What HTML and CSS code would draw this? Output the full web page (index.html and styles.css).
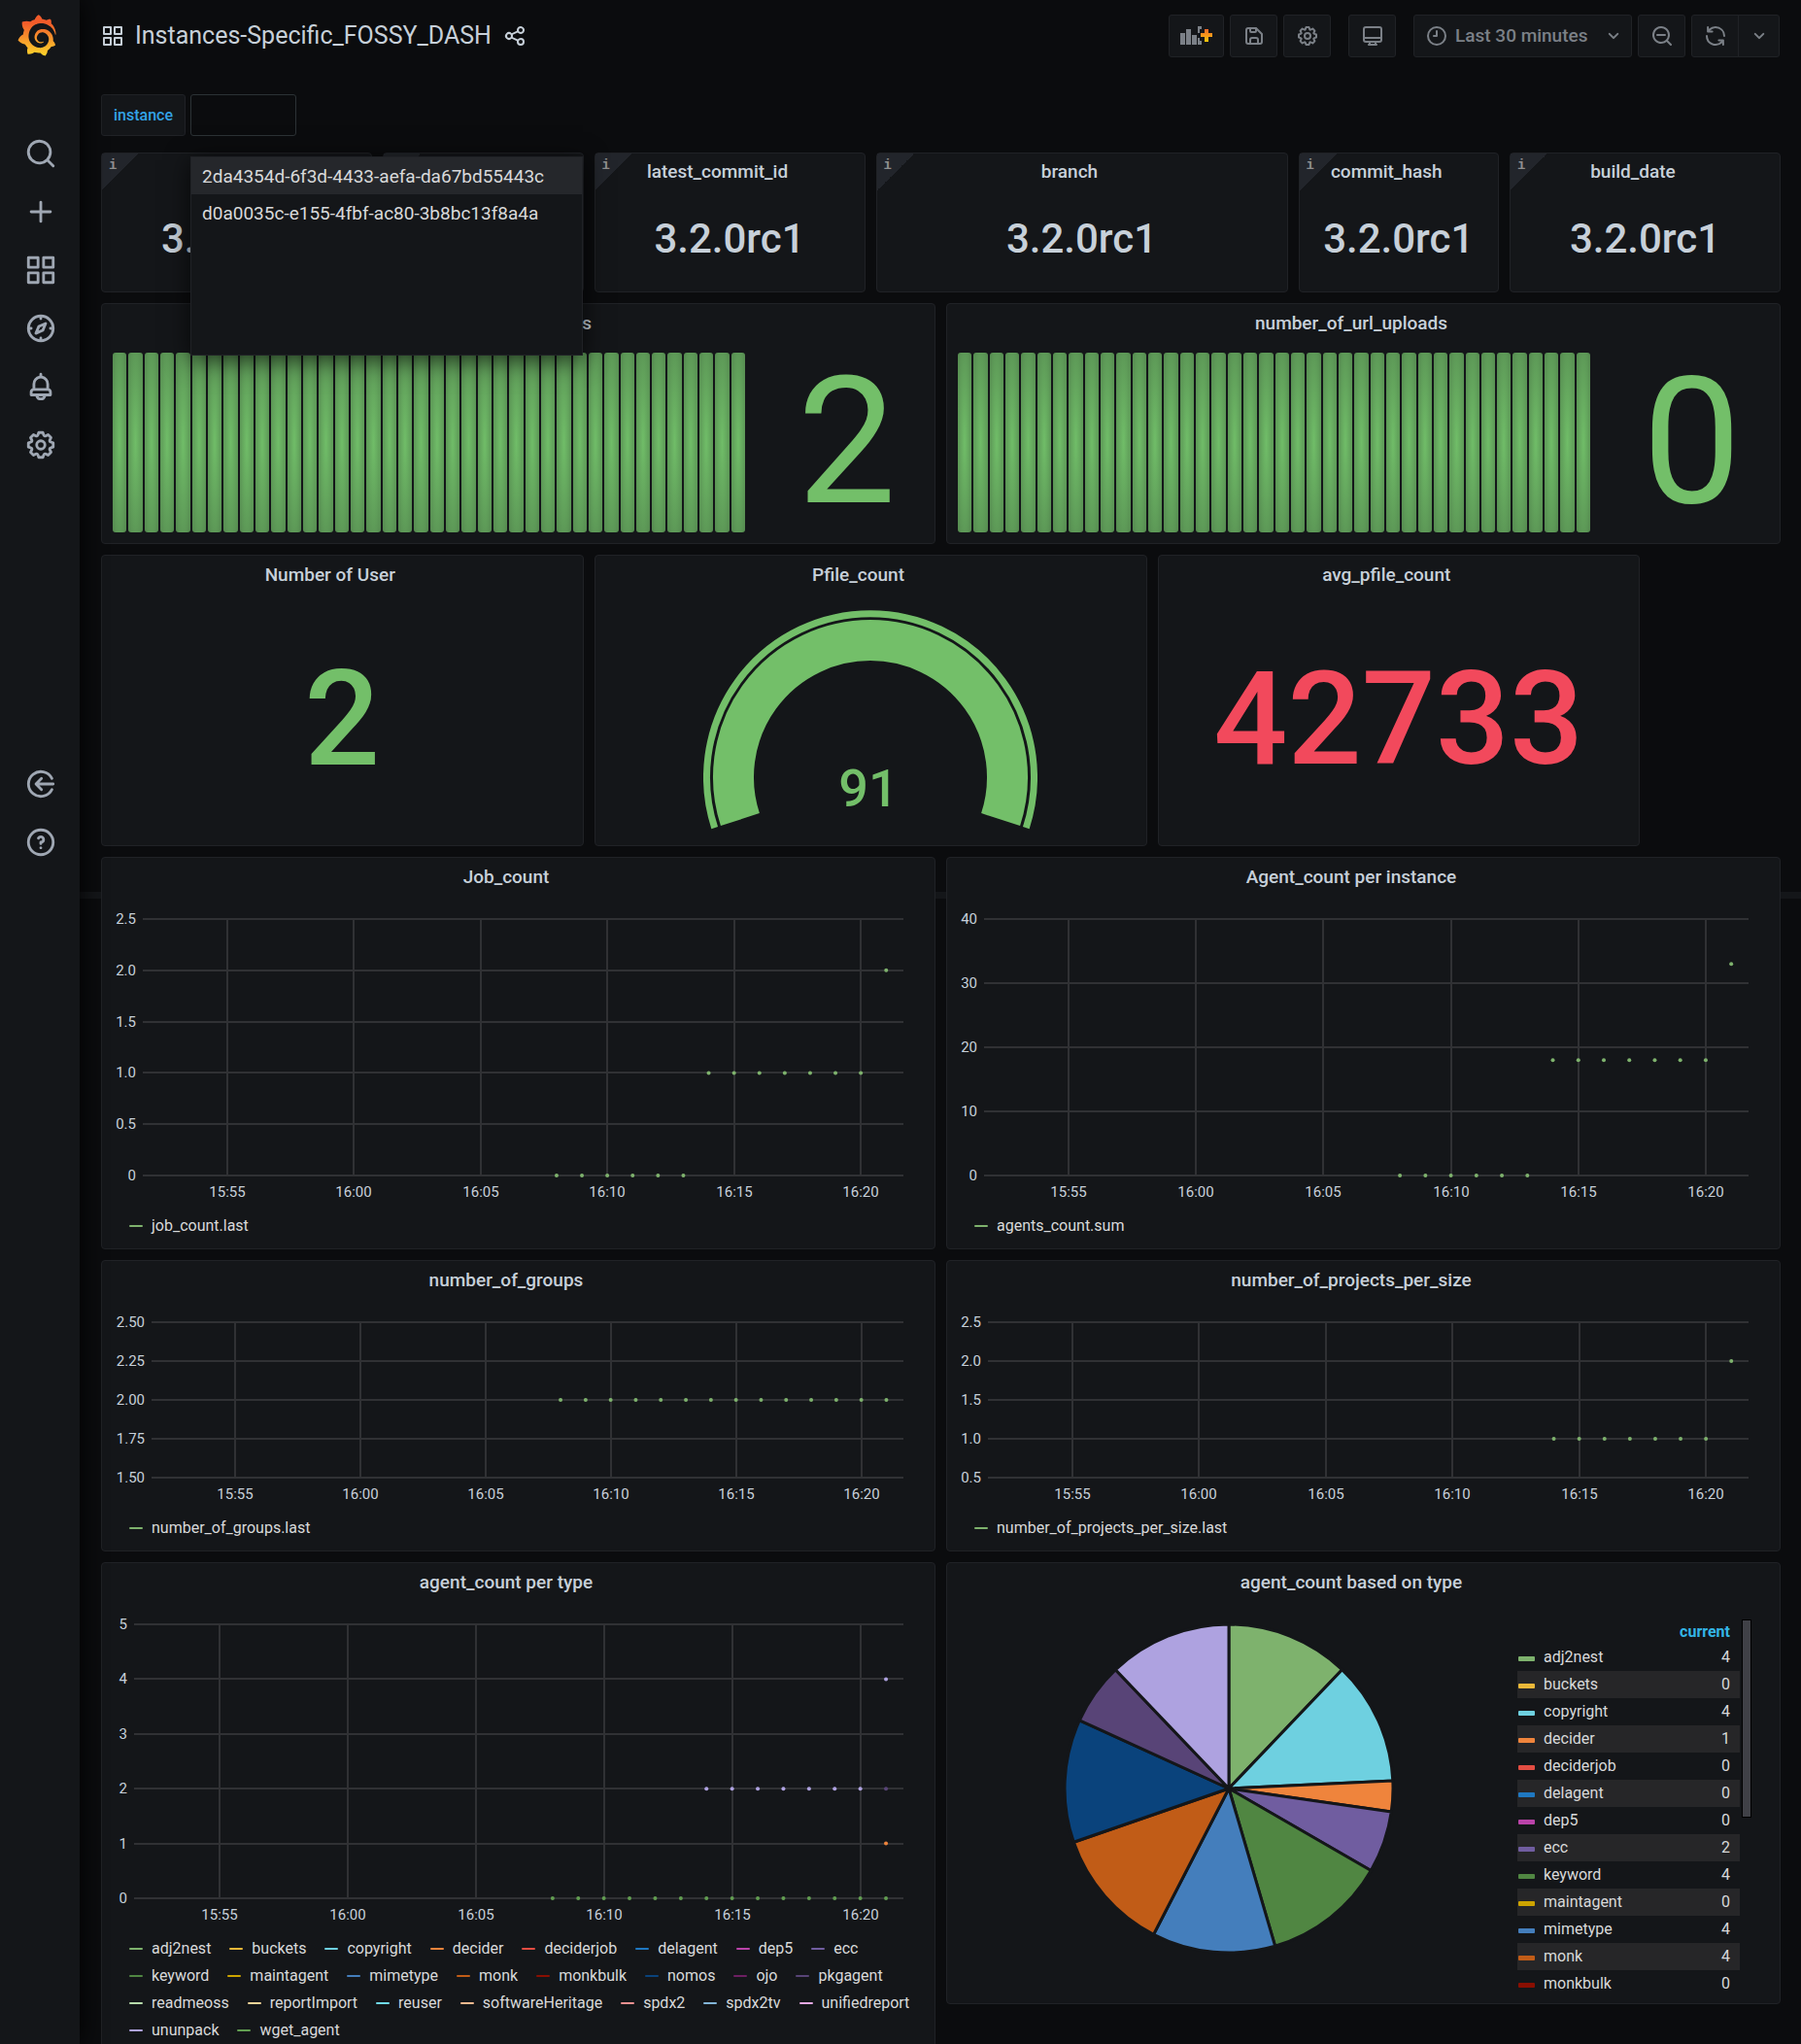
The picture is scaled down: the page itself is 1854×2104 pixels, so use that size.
FILE: index.html
```html
<!DOCTYPE html>
<html lang="en">
<head>
<meta charset="utf-8">
<title>Instances-Specific_FOSSY_DASH</title>
<link rel="stylesheet" href="styles.css">
</head>
<body>
<svg class="sprite" aria-hidden="true">
  <symbol id="i-search" viewBox="0 0 24 24"><path d="M21.71,20.29,18,16.61A9,9,0,1,0,16.61,18l3.68,3.68a1,1,0,0,0,1.42,0A1,1,0,0,0,21.71,20.29ZM11,18a7,7,0,1,1,7-7A7,7,0,0,1,11,18Z"/></symbol>
  <symbol id="i-plus" viewBox="0 0 24 24"><path d="M19,11H13V5a1,1,0,0,0-2,0v6H5a1,1,0,0,0,0,2h6v6a1,1,0,0,0,2,0V13h6a1,1,0,0,0,0-2Z"/></symbol>
  <symbol id="i-apps" viewBox="0 0 24 24"><path d="M10,13H3a1,1,0,0,0-1,1v7a1,1,0,0,0,1,1h7a1,1,0,0,0,1-1V14A1,1,0,0,0,10,13ZM9,20H4V15H9ZM21,2H14a1,1,0,0,0-1,1v7a1,1,0,0,0,1,1h7a1,1,0,0,0,1-1V3A1,1,0,0,0,21,2ZM20,9H15V4h5Zm1,4H14a1,1,0,0,0-1,1v7a1,1,0,0,0,1,1h7a1,1,0,0,0,1-1V14A1,1,0,0,0,21,13Zm-1,7H15V15h5ZM10,2H3A1,1,0,0,0,2,3v7a1,1,0,0,0,1,1h7a1,1,0,0,0,1-1V3A1,1,0,0,0,10,2ZM9,9H4V4H9Z"/></symbol>
  <symbol id="i-compass" viewBox="0 0 24 24"><path d="M12,2A10,10,0,1,0,22,12,10,10,0,0,0,12,2Zm1,17.93V19a1,1,0,0,0-2,0v.93A8,8,0,0,1,4.07,13H5a1,1,0,0,0,0-2H4.07A8,8,0,0,1,11,4.07V5a1,1,0,0,0,2,0V4.07A8,8,0,0,1,19.93,11H19a1,1,0,0,0,0,2h.93A8,8,0,0,1,13,19.93ZM15.14,7.55l-5,2.12a1,1,0,0,0-.52.52l-2.12,5a1,1,0,0,0,.21,1.1,1,1,0,0,0,.7.29.93.93,0,0,0,.4-.08l5-2.12a1,1,0,0,0,.52-.52l2.12-5a1,1,0,0,0-1.31-1.31Zm-2.49,5.1-2.28,1,1-2.28,2.28-1Z"/></symbol>
  <symbol id="i-bell" viewBox="0 0 24 24"><path d="M18,13.18V10a6,6,0,0,0-5-5.91V3a1,1,0,0,0-2,0V4.09A6,6,0,0,0,6,10v3.18A3,3,0,0,0,4,16v2a1,1,0,0,0,1,1H8.14a4,4,0,0,0,7.72,0H19a1,1,0,0,0,1-1V16A3,3,0,0,0,18,13.18ZM8,10a4,4,0,0,1,8,0v3H8Zm4,10a2,2,0,0,1-1.72-1h3.44A2,2,0,0,1,12,20Zm6-3H6V16a1,1,0,0,1,1-1H17a1,1,0,0,1,1,1Z"/></symbol>
  <symbol id="i-cog" viewBox="0 0 24 24"><path d="M21.32,9.55l-1.89-.63.89-1.78A1,1,0,0,0,20.13,6L18,3.87a1,1,0,0,0-1.15-.19l-1.78.89-.63-1.89A1,1,0,0,0,13.5,2h-3a1,1,0,0,0-.95.68L8.92,4.57,7.14,3.68A1,1,0,0,0,6,3.87L3.87,6a1,1,0,0,0-.19,1.15l.89,1.78-1.89.63A1,1,0,0,0,2,10.5v3a1,1,0,0,0,.68.95l1.89.63-.89,1.78A1,1,0,0,0,3.87,18L6,20.13a1,1,0,0,0,1.15.19l1.78-.89.63,1.89a1,1,0,0,0,.95.68h3a1,1,0,0,0,.95-.68l.63-1.89,1.78.89A1,1,0,0,0,18,20.13L20.13,18a1,1,0,0,0,.19-1.15l-.89-1.78,1.89-.63A1,1,0,0,0,22,13.5v-3A1,1,0,0,0,21.32,9.55ZM20,12.78l-1.2.4A2,2,0,0,0,17.64,16l.57,1.14-1.1,1.1L16,17.64a2,2,0,0,0-2.79,1.16l-.4,1.2H11.22l-.4-1.2A2,2,0,0,0,8,17.64l-1.14.57-1.1-1.1L6.36,16A2,2,0,0,0,5.2,13.18L4,12.78V11.22l1.2-.4A2,2,0,0,0,6.36,8L5.79,6.89l1.1-1.1L8,6.36A2,2,0,0,0,10.82,5.2l.4-1.2h1.56l.4,1.2A2,2,0,0,0,16,6.36l1.14-.57,1.1,1.1L17.64,8a2,2,0,0,0,1.16,2.79l1.2.4ZM12,8a4,4,0,1,0,4,4A4,4,0,0,0,12,8Zm0,6a2,2,0,1,1,2-2A2,2,0,0,1,12,14Z"/></symbol>
  <symbol id="i-question" viewBox="0 0 24 24"><path d="M11.29,15.29a1.58,1.58,0,0,0-.12.15.76.76,0,0,0-.09.18.64.64,0,0,0-.06.18,1.36,1.36,0,0,0,0,.2.84.84,0,0,0,.08.38.9.9,0,0,0,.54.54.94.94,0,0,0,.76,0,.9.9,0,0,0,.54-.54A1,1,0,0,0,13,16a1,1,0,0,0-.29-.71A1,1,0,0,0,11.29,15.29ZM12,2A10,10,0,1,0,22,12,10,10,0,0,0,12,2Zm0,18a8,8,0,1,1,8-8A8,8,0,0,1,12,20ZM12,7A3,3,0,0,0,9.4,8.5a1,1,0,1,0,1.73,1A1,1,0,0,1,12,9a1,1,0,0,1,0,2,1,1,0,0,0-1,1v1a1,1,0,0,0,2,0v-.18A3,3,0,0,0,12,7Z"/></symbol>
  <symbol id="i-signin" viewBox="0 0 24 24"><path d="M20.1 8A9 9 0 1 0 20.1 16M21 12H9M12.5 8L8.5 12L12.5 16" fill="none" stroke="currentColor" stroke-width="2" stroke-linecap="round" stroke-linejoin="round"/></symbol>
  <symbol id="i-share" viewBox="0 0 24 24"><path d="M18,14a4,4,0,0,0-3.08,1.48l-5.1-2.35a3.64,3.64,0,0,0,0-2.26l5.1-2.35A4,4,0,1,0,14,6a4.17,4.17,0,0,0,.07.71L8.79,9.14a4,4,0,1,0,0,5.72l5.28,2.43A4.17,4.17,0,0,0,14,18a4,4,0,1,0,4-4ZM18,4a2,2,0,1,1-2,2A2,2,0,0,1,18,4ZM6,14a2,2,0,1,1,2-2A2,2,0,0,1,6,14Zm12,6a2,2,0,1,1,2-2A2,2,0,0,1,18,20Z"/></symbol>
  <symbol id="i-save" viewBox="0 0 24 24"><path d="m20.71 9.29-6-6a1 1 0 0 0-.32-.21A1.09 1.09 0 0 0 14 3H6a3 3 0 0 0-3 3v12a3 3 0 0 0 3 3h12a3 3 0 0 0 3-3v-8a1 1 0 0 0-.29-.71ZM9 5h4v2H9Zm6 14H9v-3a1 1 0 0 1 1-1h4a1 1 0 0 1 1 1Zm4-1a1 1 0 0 1-1 1h-1v-3a3 3 0 0 0-3-3h-4a3 3 0 0 0-3 3v3H6a1 1 0 0 1-1-1V6a1 1 0 0 1 1-1h1v2a2 2 0 0 0 2 2h4a2 2 0 0 0 2-2V6.41l4 4Z"/></symbol>
  <symbol id="i-monitor" viewBox="0 0 24 24"><path d="M5 3H19A2 2 0 0 1 21 5V16A2 2 0 0 1 19 18H5A2 2 0 0 1 3 16V5A2 2 0 0 1 5 3ZM3 14H21M9 18V20L8 21H16L15 20V18" fill="none" stroke="currentColor" stroke-width="2" stroke-linejoin="round"/></symbol>
  <symbol id="i-clock" viewBox="0 0 24 24"><path d="M12 3A9 9 0 1 1 12 21A9 9 0 1 1 12 3ZM12 7V12H9" fill="none" stroke="currentColor" stroke-width="2" stroke-linecap="round" stroke-linejoin="round"/></symbol>
  <symbol id="i-zoomout" viewBox="0 0 24 24"><path d="M21.71,20.29,18,16.61A9,9,0,1,0,16.61,18l3.68,3.68a1,1,0,0,0,1.42,0A1,1,0,0,0,21.71,20.29ZM11,18a7,7,0,1,1,7-7A7,7,0,0,1,11,18ZM15,10H7a1,1,0,0,0,0,2h8a1,1,0,0,0,0-2Z"/></symbol>
  <symbol id="i-sync" viewBox="0 0 24 24"><path d="M19.91,15.51H15.38a1,1,0,0,0,0,2h2.4A8,8,0,0,1,4,12a1,1,0,1,0-2,0,10,10,0,0,0,16.88,7.23V21a1,1,0,0,0,2,0V16.5A1,1,0,0,0,19.91,15.51ZM12,2A10,10,0,0,0,5.12,4.77V3a1,1,0,0,0-2,0V7.5a1,1,0,0,0,1,1h4.5a1,1,0,0,0,0-2H6.22A8,8,0,0,1,20,12a1,1,0,0,0,2,0A10,10,0,0,0,12,2Z"/></symbol>
  <symbol id="i-down" viewBox="0 0 24 24"><path d="M17,9.17a1,1,0,0,0-1.41,0L12,12.71,8.46,9.17a1,1,0,0,0-1.41,0,1,1,0,0,0,0,1.42l4.24,4.24a1,1,0,0,0,1.42,0L17,10.59A1,1,0,0,0,17,9.17Z"/></symbol>
</svg>

<div class="app">
  <nav class="sidebar" aria-label="Main menu">
    <a class="logo" href="#" aria-label="Grafana home">
      <svg width="40" height="44" viewBox="4 0 343 377">
        <defs><linearGradient id="flame" x1="0" y1="1" x2="0" y2="0"><stop offset="0" stop-color="#fcd32a"/><stop offset="0.35" stop-color="#f9a12c"/><stop offset="0.8" stop-color="#f15b2a"/></linearGradient></defs>
        <path fill="url(#flame)" d="M342,161.2c-0.6-6.1-1.6-13.1-3.6-20.9c-2-7.7-5-16.2-9.4-25c-4.4-8.8-10.1-17.9-17.5-26.8c-2.9-3.5-6.1-6.9-9.5-10.2c5.1-20.3-6.2-37.9-6.2-37.9c-19.5-1.2-31.9,6.1-36.5,9.4c-0.8-0.3-1.5-0.7-2.3-1c-3.3-1.3-6.7-2.6-10.3-3.7c-3.5-1.1-7.1-2.1-10.8-3c-3.7-0.9-7.4-1.6-11.2-2.2c-0.7-0.1-1.3-0.2-2-0.3c-8.5-27.2-32.9-38.6-32.9-38.6c-27.3,17.3-32.4,41.5-32.4,41.5s-0.1,0.5-0.3,1.4c-1.5,0.4-3,0.9-4.5,1.3c-2.1,0.6-4.2,1.4-6.2,2.2c-2.1,0.8-4.1,1.6-6.2,2.5c-4.1,1.8-8.2,3.8-12.2,6c-3.9,2.2-7.7,4.6-11.4,7.1c-0.5-0.2-1-0.4-1-0.4c-37.8-14.4-71.3,2.9-71.3,2.9c-3.1,40.2,15.1,65.5,18.7,70.1c-0.9,2.5-1.7,5-2.5,7.5c-2.8,9.1-4.9,18.4-6.2,28.1c-0.2,1.4-0.4,2.8-0.5,4.2C18.8,192.7,8.5,228,8.5,228c29.1,33.5,63.1,35.6,63.1,35.6c0,0,0.1-0.1,0.1-0.1c4.3,7.7,9.3,15,14.9,21.9c2.4,2.9,4.8,5.6,7.4,8.3c-10.6,30.4,1.5,55.6,1.5,55.6c32.4,1.2,53.7-14.2,58.2-17.7c3.2,1.1,6.5,2.1,9.8,2.9c10,2.6,20.2,4.1,30.4,4.5c2.5,0.1,5.1,0.2,7.6,0.1l1.2,0l0.8,0l1.6,0l1.6-0.1l0,0.1c15.3,21.8,42.1,24.9,42.1,24.9c19.1-20.1,20.2-40.1,20.2-44.4l0,0c0,0,0-0.1,0-0.3c0-0.4,0-0.6,0-0.6l0,0c0-0.3,0-0.6,0-0.9c4-2.8,7.8-5.8,11.4-9.1c7.6-6.9,14.3-14.8,19.9-23.3c0.5-0.8,1-1.6,1.5-2.4c21.6,1.2,36.9-13.4,36.9-13.4c-3.6-22.5-16.4-33.5-19.1-35.6l0,0c0,0-0.1-0.1-0.3-0.2c-0.2-0.1-0.2-0.2-0.2-0.2c-0.1-0.1-0.3-0.2-0.5-0.3c0.1-1.4,0.2-2.7,0.3-4.1c0.2-2.4,0.2-4.9,0.2-7.3l0-1.8l0-0.9l0-0.5l-0.1-2.1l-0.1-2c0-0.7-0.1-1.3-0.2-1.9c-0.1-0.6-0.1-1.3-0.2-1.9l-0.2-1.9l-0.3-1.9c-0.4-2.5-0.8-4.9-1.4-7.4c-2.3-9.7-6.1-18.9-11-27.2c-5-8.3-11.2-15.6-18.3-21.8c-7-6.2-14.9-11.2-23.1-14.9c-8.3-3.7-16.9-6.1-25.5-7.2c-4.3-0.6-8.6-0.8-12.9-0.7l-1.6,0l-0.9,0l-0.7,0l-1.6,0.1c-0.6,0-1.2,0.1-1.7,0.1c-2.2,0.2-4.4,0.5-6.5,0.9c-8.6,1.6-16.7,4.7-23.8,9c-7.1,4.3-13.3,9.6-18.3,15.6c-5,6-8.9,12.7-11.6,19.6c-2.7,6.9-4.2,14.1-4.6,21c-0.1,1.7-0.1,3.5-0.1,5.2c0,0.4,0,0.9,0,1.3l0.1,1.4c0.1,0.8,0.1,1.7,0.2,2.5c0.3,3.5,1,6.9,1.9,10.1c1.9,6.5,4.9,12.4,8.6,17.4c3.7,5,8.2,9.1,12.9,12.4c4.7,3.2,9.8,5.5,14.8,7c5,1.5,10,2.1,14.7,2.1c0.6,0,1.2,0,1.7,0c0.3,0,0.6,0,0.9,0c0.3,0,0.6,0,0.9-0.1c0.5,0,1-0.1,1.5-0.1c0.1,0,0.3,0,0.4-0.1l0.5-0.1c0.3,0,0.6-0.1,0.9-0.1c0.6-0.1,1.1-0.2,1.7-0.3c0.6-0.1,1.1-0.2,1.6-0.4c1.1-0.2,2.1-0.6,3.1-0.9c2-0.7,4-1.5,5.7-2.4c1.8-0.9,3.4-2,5-3c0.4-0.3,0.9-0.6,1.3-1c1.6-1.3,1.9-3.7,0.6-5.3c-1.1-1.4-3.1-1.8-4.7-0.9c-0.4,0.2-0.8,0.4-1.2,0.6c-1.4,0.7-2.8,1.3-4.3,1.8c-1.5,0.5-3.1,0.9-4.7,1.2c-0.8,0.1-1.6,0.2-2.5,0.3c-0.4,0-0.8,0.1-1.3,0.1c-0.4,0-0.9,0-1.2,0c-0.4,0-0.8,0-1.2,0c-0.5,0-1,0-1.5-0.1l-0.6,0c-0.2,0-0.5,0-0.7-0.1c-0.5-0.1-0.9-0.1-1.4-0.2c-3.7-0.5-7.4-1.6-10.9-3.2c-3.6-1.6-7-3.8-10.1-6.6c-3.1-2.8-5.8-6.1-7.9-9.9c-2.1-3.8-3.6-8-4.3-12.4c-0.3-2.2-0.5-4.5-0.4-6.7c0-0.6,0.1-1.2,0.1-1.8l0-0.8c0-0.3,0.1-0.6,0.1-0.9c0.1-1.2,0.3-2.4,0.5-3.6c1.7-9.6,6.5-19,13.9-26.1c1.9-1.8,3.9-3.4,6-4.9c2.1-1.5,4.4-2.8,6.8-3.9c2.4-1.1,4.8-2,7.4-2.7c2.5-0.7,5.1-1.1,7.8-1.4c1.3-0.1,2.6-0.2,4-0.2c0.4,0,0.6,0,0.9,0l1.1,0l0.7,0l0.4,0l1.1,0.1c2.9,0.2,5.7,0.6,8.5,1.3c5.6,1.2,11.1,3.3,16.2,6.1c10.2,5.7,18.9,14.5,24.2,25.1c2.7,5.3,4.6,11,5.5,16.9c0.2,1.5,0.4,3,0.5,4.5l0.1,1.1l0.1,1.1c0,0.4,0,0.8,0,1.1c0,0.4,0,0.8,0,1.1l0,1l0,1.1c0,0.7-0.1,1.9-0.1,2.6c-0.1,1.6-0.3,3.3-0.5,4.9c-0.2,1.6-0.5,3.2-0.8,4.8c-0.3,1.6-0.7,3.2-1.1,4.7c-0.8,3.1-1.8,6.2-3,9.3c-2.4,6-5.6,11.8-9.4,17.1c-7.7,10.6-18.2,19.2-30.2,24.7c-6,2.7-12.3,4.7-18.8,5.7c-3.2,0.6-6.5,0.9-9.8,1l-0.6,0l-0.5,0l-1.1,0l-1.6,0l-1.2,0c-1.8,0-3.5-0.1-5.3-0.3c-7-0.5-13.9-1.8-20.7-3.7c-6.7-1.9-13.2-4.6-19.4-7.8c-12.3-6.6-23.4-15.6-32-26.5c-4.3-5.4-8.1-11.3-11.2-17.4c-3.1-6.1-5.6-12.6-7.4-19.1c-1.8-6.6-2.9-13.3-3.4-20.1l-0.1-1.3l0-0.3l0-0.3l0-0.6l0-1.1l0-0.3l0-0.4l0-0.8l0-1.6l0-0.9c0-0.8,0-1.7,0-2.5c0.1-3.3,0.4-6.8,0.8-10.2c0.4-3.4,1-6.9,1.7-10.3c0.7-3.4,1.5-6.8,2.5-10.2c1.9-6.7,4.3-13.2,7.1-19.3c5.7-12.2,13.1-23.1,22-31.8c2.2-2.2,4.5-4.2,6.9-6.2c2.4-1.9,4.9-3.7,7.5-5.4c2.5-1.7,5.2-3.2,7.9-4.6c1.3-0.7,2.7-1.4,4.1-2c0.7-0.3,1.4-0.6,2.1-0.9c0.7-0.3,1.4-0.6,2.1-0.9c2.8-1.2,5.7-2.2,8.7-3.1c0.7-0.2,1.5-0.4,2.2-0.7c0.7-0.2,1.5-0.4,2.2-0.6c1.5-0.4,3-0.8,4.5-1.1c0.7-0.2,1.5-0.3,2.3-0.5c0.8-0.2,1.5-0.3,2.3-0.5c0.8-0.1,1.5-0.3,2.3-0.4l1.1-0.2l1.2-0.2c0.8-0.1,1.5-0.2,2.3-0.3c0.9-0.1,1.7-0.2,2.6-0.3c0.7-0.1,1.9-0.2,2.6-0.3c0.5-0.1,1.1-0.1,1.6-0.2l1.1-0.1l0.5-0.1l0.6,0c0.9-0.1,1.7-0.1,2.6-0.2l1.3-0.1l0.4,0l0.6,0c0.7,0,1.5-0.1,2.2-0.1c2.9-0.1,5.9-0.1,8.8,0c5.8,0.2,11.5,0.9,17,1.9c11.1,2.1,21.5,5.6,31,10.3c9.5,4.6,17.9,10.3,25.3,16.5c0.5,0.4,0.9,0.8,1.4,1.2c0.4,0.4,0.9,0.8,1.3,1.2c0.9,0.8,1.7,1.6,2.6,2.4c0.9,0.8,1.7,1.6,2.5,2.4c0.8,0.8,1.6,1.6,2.4,2.5c3.1,3.3,6,6.6,8.6,10c5.2,6.7,9.4,13.5,12.7,19.9c0.2,0.4,0.4,0.8,0.6,1.2c0.2,0.4,0.4,0.8,0.6,1.2c0.4,0.8,0.8,1.6,1.1,2.4c0.4,0.8,0.7,1.5,1.1,2.3c0.3,0.8,0.7,1.5,1,2.3c1.2,3,2.4,5.9,3.3,8.6c1.5,4.4,2.6,8.3,3.5,11.7c0.3,1.4,1.6,2.3,3,2.1c1.5-0.1,2.6-1.3,2.6-2.8C342.6,170.4,342.5,166.1,342,161.2z"/>
      </svg>
    </a>
    <div class="nav-group">
      <a href="#" aria-label="Search"><svg class="nav-icon"><use href="#i-search"/></svg></a>
      <a href="#" aria-label="Create"><svg class="nav-icon"><use href="#i-plus"/></svg></a>
      <a href="#" aria-label="Dashboards"><svg class="nav-icon"><use href="#i-apps"/></svg></a>
      <a href="#" aria-label="Explore"><svg class="nav-icon"><use href="#i-compass"/></svg></a>
      <a href="#" aria-label="Alerting"><svg class="nav-icon"><use href="#i-bell"/></svg></a>
      <a href="#" aria-label="Configuration"><svg class="nav-icon"><use href="#i-cog"/></svg></a>
    </div>
    <div class="nav-group nav-bottom">
      <a href="#" aria-label="Sign in"><svg class="nav-icon"><use href="#i-signin"/></svg></a>
      <a href="#" aria-label="Help"><svg class="nav-icon"><use href="#i-question"/></svg></a>
    </div>
  </nav>

  <main class="main">
    <header class="topbar">
      <svg class="title-icon"><use href="#i-apps"/></svg>
      <h1 class="page-title">Instances-Specific_FOSSY_DASH</h1>
      <button class="share" aria-label="Share dashboard"><svg class="title-icon"><use href="#i-share"/></svg></button>
      <div class="tools">
        <button class="tool tool-add" aria-label="Add panel">
          <svg width="33" height="22" viewBox="0 0 33 22"><path fill="#7b8087" d="M0 8h5v12H0zM6 4h5v16H6zM12 10h5v10h-5zM18 1h4v3h-2v4h-2zM18 13h2v3h2v4h-4z"/><path fill="url(#plus)" d="M25 4h4v4h4v4h-4v5h-4v-5h-4V8h4z"/><defs><linearGradient id="plus" x1="0" y1="0" x2="0" y2="1"><stop offset="0" stop-color="#f2682a"/><stop offset="1" stop-color="#fbca0a"/></linearGradient></defs></svg>
        </button>
        <button class="tool" aria-label="Save dashboard"><svg class="tool-icon"><use href="#i-save"/></svg></button>
        <button class="tool" aria-label="Dashboard settings"><svg class="tool-icon"><use href="#i-cog"/></svg></button>
        <button class="tool tool-view" aria-label="Cycle view mode"><svg class="tool-icon"><use href="#i-monitor"/></svg></button>
        <button class="tool tool-time"><svg class="tool-icon"><use href="#i-clock"/></svg><span class="time-text">Last 30 minutes</span><svg class="tool-icon caret"><use href="#i-down"/></svg></button>
        <button class="tool" aria-label="Zoom out"><svg class="tool-icon"><use href="#i-zoomout"/></svg></button>
        <div class="tool-pair">
          <button class="tool" aria-label="Refresh"><svg class="tool-icon"><use href="#i-sync"/></svg></button>
          <button class="tool tool-small" aria-label="Refresh interval"><svg class="tool-icon"><use href="#i-down"/></svg></button>
        </div>
      </div>
    </header>

    <div class="variables">
      <label class="var-label" for="instance">instance</label>
      <div class="var-field">
        <input class="var-input" id="instance" type="text" autocomplete="off">
        <ul class="options">
          <li class="option selected">2da4354d-6f3d-4433-aefa-da67bd55443c</li>
          <li class="option">d0a0035c-e155-4fbf-ac80-3b8bc13f8a4a</li>
        </ul>
      </div>
    </div>

    <div class="grid">
      <section class="panel w4 info"><h2 class="panel-title"></h2><div class="stat">3.2.0rc1</div></section>
      <section class="panel w3 info"><h2 class="panel-title"></h2><div class="stat"></div></section>
      <section class="panel w4 info"><h2 class="panel-title">latest_commit_id</h2><div class="stat">3.2.0rc1</div></section>
      <section class="panel w6 info"><h2 class="panel-title">branch</h2><div class="stat">3.2.0rc1</div></section>
      <section class="panel w3 info"><h2 class="panel-title">commit_hash</h2><div class="stat">3.2.0rc1</div></section>
      <section class="panel w4 info"><h2 class="panel-title">build_date</h2><div class="stat">3.2.0rc1</div></section>

      <section class="panel w12"><h2 class="panel-title">number_file_uploads</h2><div class="bargauge"><div class="bars"></div><div class="bar-value">2</div></div></section>
      <section class="panel w12"><h2 class="panel-title">number_of_url_uploads</h2><div class="bargauge"><div class="bars"></div><div class="bar-value">0</div></div></section>

      <section class="panel w7"><h2 class="panel-title">Number of User</h2><div class="stat big green">2</div></section>
      <section class="panel w8"><h2 class="panel-title">Pfile_count</h2>
        <div class="gauge">
          <svg width="344" height="226" viewBox="-172 -172 344 226" fill="none" stroke="#73bf69">
            <path stroke-width="7" d="M-160.3 52.1A168.5 168.5 0 1 1 160.3 52.1"/>
            <path stroke-width="42" d="M-134.1 43.6A141 141 0 1 1 134.1 43.6"/>
            <text class="gauge-value" x="-2" y="30" text-anchor="middle">91</text>
          </svg>
        </div>
      </section>
      <section class="panel w7"><h2 class="panel-title">avg_pfile_count</h2><div class="stat big red">42733</div></section>

      <section class="panel w12 row-start"><h2 class="panel-title">Job_count</h2><div class="chart" data-chart="jobs"></div><ul class="legend"></ul></section>
      <section class="panel w12"><h2 class="panel-title">Agent_count per instance</h2><div class="chart" data-chart="agents"></div><ul class="legend"></ul></section>
      <section class="panel w12"><h2 class="panel-title">number_of_groups</h2><div class="chart" data-chart="groups"></div><ul class="legend"></ul></section>
      <section class="panel w12"><h2 class="panel-title">number_of_projects_per_size</h2><div class="chart" data-chart="projects"></div><ul class="legend"></ul></section>
      <section class="panel w12 tall"><h2 class="panel-title">agent_count per type</h2><div class="chart" data-chart="types"></div><ul class="legend"></ul></section>
      <section class="panel w12"><h2 class="panel-title">agent_count based on type</h2>
        <div class="pie-body">
          <div class="pie"></div>
          <div class="pie-legend">
            <table class="pie-table"><thead><tr><th></th><th class="num">current</th></tr></thead><tbody></tbody></table>
            <div class="scroll-thumb"></div>
          </div>
        </div>
      </section>
    </div>
  </main>
</div>
<script src="script.js"></script>
</body>
</html>
```
FILE: styles.css
```css
* { box-sizing: border-box; }
body { margin: 0; background: #0b0c0e; color: #c7d0d9; font-family: Roboto, "Liberation Sans", sans-serif; font-size: 16px; }
h1, h2, ul { margin: 0; padding: 0; }
ul { list-style: none; }
button { font: inherit; color: inherit; cursor: pointer; }
svg { display: block; }
use, symbol { fill: currentColor; }
.sprite { position: absolute; width: 0; height: 0; }

.app { display: flex; height: 100vh; overflow: hidden; }

.sidebar { position: relative; z-index: 2; flex: none; width: 82px; padding: 15px 0 0 2px; background: #141619; box-shadow: 0 0 27px #000; display: flex; flex-direction: column; align-items: center; color: #9fa7b3; }
.logo { margin-right: 8px; }
.nav-group { display: flex; flex-direction: column; gap: 26px; margin-top: 82px; }
.nav-bottom { margin-top: 315px; }
.nav-icon { width: 34px; height: 34px; }
.nav-group a { color: inherit; }

.main { flex: 1; min-width: 0; padding: 0 21px 0 22px; background: linear-gradient(#141619, #141619) no-repeat 0 918px / 100% 7px; }
.topbar { display: flex; align-items: center; height: 74px; padding-right: 1px; }
.title-icon { width: 24px; height: 24px; }
.page-title { margin-left: 11px; font-size: 25px; line-height: 32px; font-weight: 400; }
.share { margin-left: 12px; padding: 0; border: 0; background: none; }
.tools { margin-left: auto; display: flex; align-items: center; gap: 6px; color: #7b8087; }
.tool { display: flex; align-items: center; justify-content: center; width: 49px; height: 44px; padding: 0; border: 1px solid #202226; border-radius: 3px; background: #141619; }
.tool-add { width: 57px; }
.tool-icon { width: 24px; height: 24px; }
.tool-view { margin: 0 12px; }
.tool-time { width: 225px; justify-content: flex-start; padding-left: 11px; gap: 7px; font-size: 19px; font-weight: 500; }
.time-text { padding-bottom: 2px; }
.tool-time .caret { margin-left: 8px; }
.tool-pair { display: flex; }
.tool-pair .tool:first-child { border-radius: 3px 0 0 3px; }
.tool-small { width: 43px; margin-left: -1px; border-radius: 0 3px 3px 0; }

.variables { display: flex; gap: 5px; margin-top: 23px; }
.var-label { height: 43px; padding: 0 12px; border: 1px solid #202226; border-radius: 3px; background: #141619; color: #33a2e5; font-size: 16px; line-height: 42px; font-weight: 500; }
.var-field { position: relative; }
.var-input { display: block; width: 109px; height: 43px; border: 1px solid #2c3235; border-radius: 3px; background: #0b0c0e; color: #c7d0d9; outline: 0; }
.options { position: absolute; z-index: 1; top: 64px; left: 0; width: 404px; height: 205px; border: 1px solid #202226; background: #141619; box-shadow: 0 4px 24px rgba(0, 0, 0, 0.7); }
.option { height: 38px; padding: 0 11px; font-size: 19px; line-height: 40px; white-space: nowrap; color: #d8d9da; }
.option.selected { background: #25272b; }

.grid { display: grid; grid-template-columns: repeat(24, minmax(0, 1fr)); grid-template-rows: 144px 248px 300px 404px 300px 455px 100px; gap: 11px; margin-top: 17px; }
.panel { display: flex; flex-direction: column; min-width: 0; border: 1px solid #202226; border-radius: 4px; background: #141619; }
.w3 { grid-column: span 3; }
.w4 { grid-column: span 4; }
.w6 { grid-column: span 6; }
.w7 { grid-column: span 7; }
.w8 { grid-column: span 8; }
.w12 { grid-column: span 12; }
.row-start { grid-column: 1 / span 12; }
.tall { grid-row: span 2; }
.panel-title { flex: none; height: 38px; padding-right: 25px; text-align: center; font-size: 19px; line-height: 40px; font-weight: 500; white-space: nowrap; }
.info { position: relative; }
.info .panel-title { line-height: 38px; }
.info::before { content: ""; position: absolute; top: 0; left: 0; width: 38px; height: 38px; background: linear-gradient(135deg, #22252b 50%, transparent 50%); }
.info::after { content: "i"; position: absolute; top: 3px; left: 7px; color: #8e8e8e; font: bold 14px/18px "Liberation Mono", monospace; }

.stat { flex: 1; display: flex; align-items: center; justify-content: center; padding-bottom: 5px; font-size: 42px; font-weight: 500; }
.big { font-size: 137px; padding-bottom: 0; }
.green { color: #73bf69; }
.red { color: #f2495c; font-size: 134px; }

.bargauge { flex: 1; display: flex; padding: 12px 0 11px 11px; }
.bars { flex: 1; display: flex; gap: 2px; }
.bars span { flex: 1; border-radius: 3px; background: radial-gradient(#70bd68, #558a50); }
.bar-value { flex: none; width: 195px; display: flex; align-items: center; justify-content: center; padding-left: 14px; color: #73bf69; font-size: 181px; line-height: 185px; }

.gauge { flex: 1; display: flex; justify-content: center; padding-top: 18px; }
.gauge-value { fill: #73bf69; stroke: none; font-size: 54px; font-weight: 500; }

.chart { flex: none; overflow: hidden; }
.tick { fill: #c7d0d9; font-size: 15px; }
.gridline { stroke: #303134; stroke-width: 2; }
.legend { display: flex; flex-wrap: wrap; column-gap: 19px; padding: 0 10px 0 28px; }
.legend li { display: flex; align-items: center; gap: 9px; line-height: 28px; white-space: nowrap; color: #d8d9da; }
.key { width: 14px; height: 2px; border-radius: 1px; }

.pie-body { flex: 1; min-height: 0; display: flex; padding: 20px 29px 0 118px; }
.pie { padding-top: 2px; }
.pie-legend { display: flex; gap: 2px; margin-left: auto; height: 390px; overflow: hidden; }
.pie-table { width: 229px; border-collapse: collapse; color: #d8d9da; align-self: flex-start; }
.pie-table th, .pie-table td { height: 28px; padding: 0 10px 0 0; text-align: left; font-size: 16px; line-height: 28px; }
.pie-table .num { text-align: right; }
.pie-table th { height: 25px; line-height: 24px; color: #33b5e5; font-weight: 700; }
.pie-table tbody tr:nth-child(even) { background: #262628; }
.pie-table .key { display: inline-block; width: 17px; height: 5px; margin: 0 9px 0 1px; vertical-align: 1px; }
.scroll-thumb { width: 10px; height: 204px; border: 1px solid #000; background: #404147; }
```
FILE: script.js
```js
const SVG = 'http://www.w3.org/2000/svg';

const series = [
  ['adj2nest', '#7eb26d', 4], ['buckets', '#eab839', 0], ['copyright', '#6ed0e0', 4], ['decider', '#ef843c', 1],
  ['deciderjob', '#e24d42', 0], ['delagent', '#1f78c1', 0], ['dep5', '#ba43a9', 0], ['ecc', '#705da0', 2],
  ['keyword', '#508642', 4], ['maintagent', '#cca300', 0], ['mimetype', '#447ebc', 4], ['monk', '#c15c17', 4],
  ['monkbulk', '#890f02', 0], ['nomos', '#0a437c', 4], ['ojo', '#6d1f62', 0], ['pkgagent', '#584477', 2],
  ['readmeoss', '#b7dbab', 0], ['reportImport', '#f4d598', 0], ['reuser', '#70dbed', 0], ['softwareHeritage', '#f9ba8f', 0],
  ['spdx2', '#f29191', 0], ['spdx2tv', '#82b5d8', 0], ['unifiedreport', '#e5a8e2', 0], ['ununpack', '#aea2e0', 4],
  ['wget_agent', '#629e51', 0]
];

// Points are [first minute, last minute, value, colour], in minutes after 15:55.
const green = '#7eb26d';
const charts = {
  jobs: { left: 42, height: 264, ticks: ['2.5', '2.0', '1.5', '1.0', '0.5', '0'], min: 0, max: 2.5,
    points: [[13, 18, 0, green], [19, 25, 1, green], [26, 26, 2, green]], legend: [['job_count.last', green]] },
  agents: { left: 38, height: 264, ticks: ['40', '30', '20', '10', '0'], min: 0, max: 40,
    points: [[13, 18, 0, green], [19, 25, 18, green], [26, 26, 33, green]], legend: [['agents_count.sum', green]] },
  groups: { left: 51, height: 160, ticks: ['2.50', '2.25', '2.00', '1.75', '1.50'], min: 1.5, max: 2.5,
    points: [[13, 26, 2, green]], legend: [['number_of_groups.last', green]] },
  projects: { left: 42, height: 160, ticks: ['2.5', '2.0', '1.5', '1.0', '0.5'], min: 0.5, max: 2.5,
    points: [[19, 25, 1, green], [26, 26, 2, green]], legend: [['number_of_projects_per_size.last', green]] },
  types: { left: 33, height: 282, ticks: ['5', '4', '3', '2', '1', '0'], min: 0, max: 5,
    points: [[13, 26, 0, '#629e51'], [19, 25, 2, '#aea2e0'], [26, 26, 2, '#584477'], [26, 26, 1, '#ef843c'], [26, 26, 4, '#aea2e0']],
    legend: series }
};

function add(parent, name, attrs, text) {
  const node = document.createElementNS(SVG, name);
  for (const key in attrs) node.setAttribute(key, attrs[key]);
  if (text) node.textContent = text;
  parent.appendChild(node);
  return node;
}

function drawChart(box) {
  const c = charts[box.dataset.chart];
  const top = 25, right = box.clientWidth - 32, bottom = top + c.height;
  box.replaceChildren();
  const svg = add(box, 'svg', { width: box.clientWidth, height: bottom + 38 });
  const x = m => c.left + (m + 3.32) / 30 * (right - c.left);
  c.ticks.forEach((label, i) => {
    const y = Math.round(top + i * c.height / (c.ticks.length - 1));
    add(svg, 'line', { class: 'gridline', x1: c.left, x2: right, y1: y, y2: y });
    add(svg, 'text', { class: 'tick', x: c.left - 7, y: y + 5, 'text-anchor': 'end' }, label);
  });
  ['15:55', '16:00', '16:05', '16:10', '16:15', '16:20'].forEach((label, i) => {
    const at = Math.round(x(i * 5));
    add(svg, 'line', { class: 'gridline', x1: at, x2: at, y1: top, y2: bottom });
    add(svg, 'text', { class: 'tick', x: at, y: bottom + 22, 'text-anchor': 'middle' }, label);
  });
  for (const [from, to, value, color] of c.points) {
    const y = bottom - (value - c.min) / (c.max - c.min) * c.height;
    for (let m = from; m <= to; m++) add(svg, 'circle', { cx: x(m), cy: y, r: 2, fill: color });
  }
}

const boxes = document.querySelectorAll('.chart');
boxes.forEach(box => {
  box.nextElementSibling.innerHTML = charts[box.dataset.chart].legend
    .map(([name, color]) => `<li><span class="key" style="background:${color}"></span>${name}</li>`).join('');
});
const drawAll = () => boxes.forEach(drawChart);
drawAll();
window.addEventListener('resize', drawAll);

document.querySelectorAll('.bars').forEach(bars => { bars.innerHTML = '<span></span>'.repeat(40); });

document.querySelector('.pie-table tbody').innerHTML = series.slice(0, 13)
  .map(([name, color, value]) => `<tr><td><span class="key" style="background:${color}"></span>${name}</td><td class="num">${value}</td></tr>`).join('');

const pie = add(document.querySelector('.pie'), 'svg', { width: 344, height: 344, viewBox: '-172 -172 344 344' });
const total = series.reduce((sum, s) => sum + s[2], 0);
let start = 0;
for (const [, color, value] of series) {
  if (!value) continue;
  const end = start + value / total * 2 * Math.PI;
  const p = a => `${169 * Math.sin(a)} ${-169 * Math.cos(a)}`;
  add(pie, 'path', { d: `M0 0L${p(start)}A169 169 0 0 1 ${p(end)}Z`, fill: color, stroke: '#141619', 'stroke-width': 3 });
  start = end;
}
```
